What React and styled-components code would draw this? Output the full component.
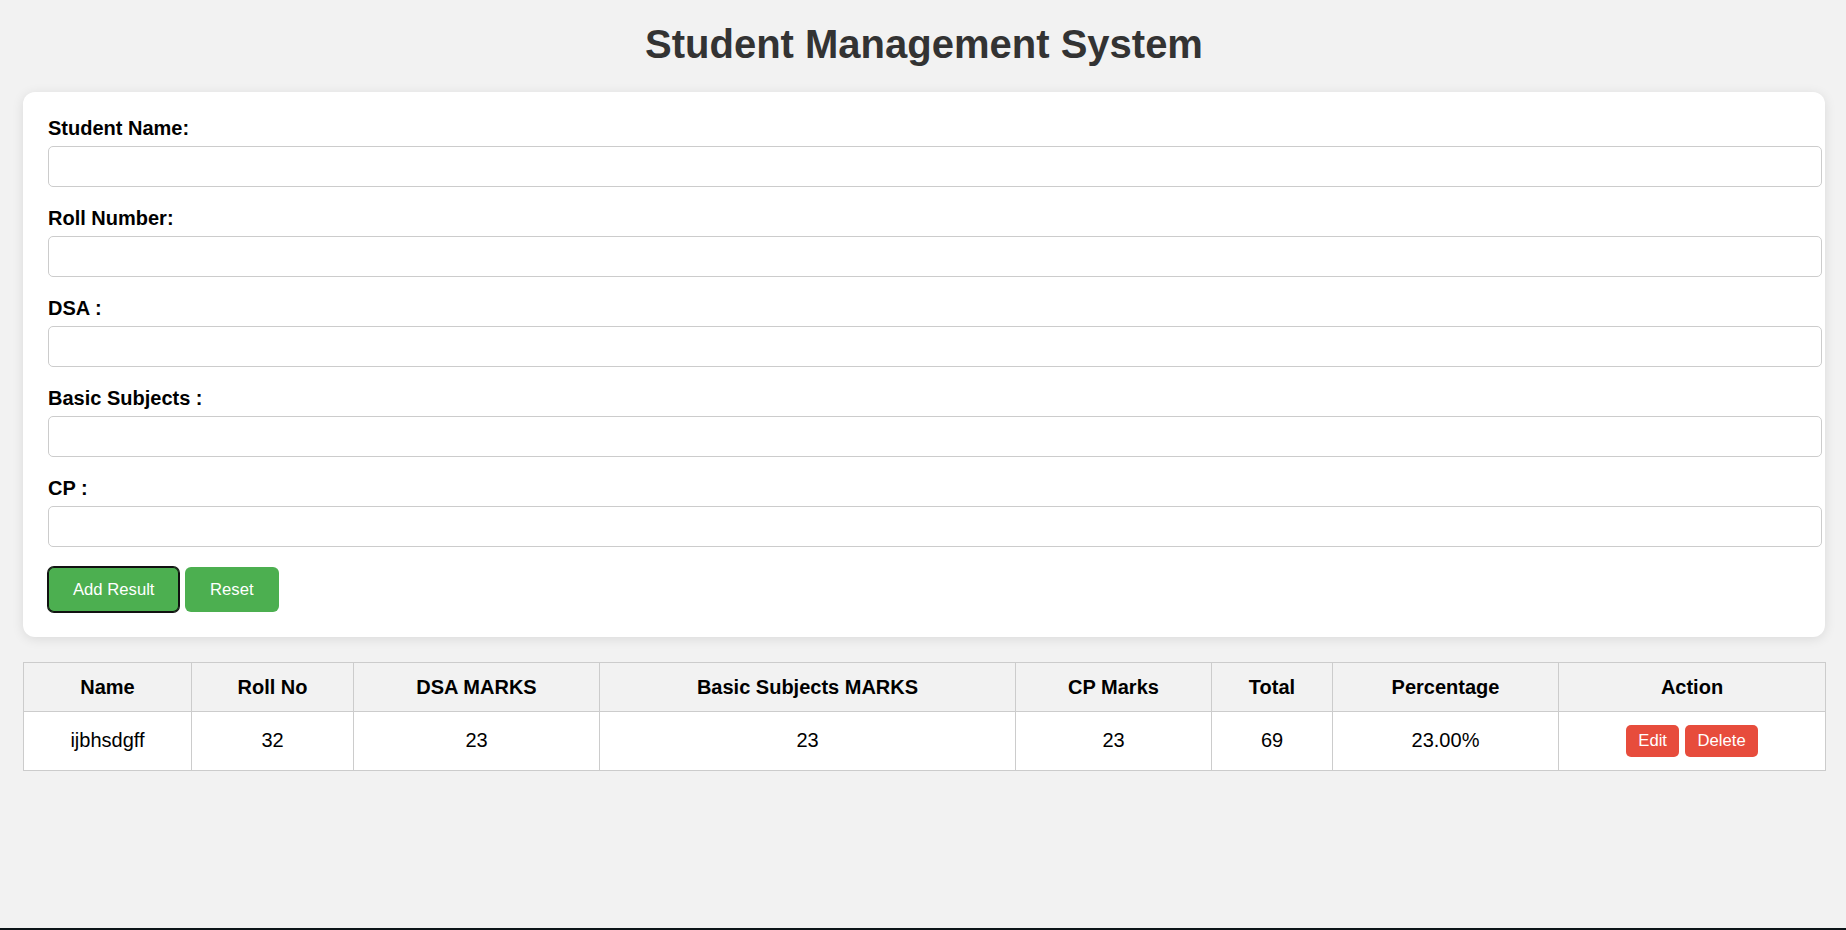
import React, { useState } from "react";
import styled, { createGlobalStyle, css } from "styled-components";

const GlobalStyle = createGlobalStyle`
  * {
    box-sizing: content-box;
  }
  body {
    margin: 0;
    background: #f2f2f2;
    font-family: "Liberation Sans", Arial, sans-serif;
    font-size: 20px;
    color: #000;
  }
`;

const FIELDS = [
  { key: "name", label: "Student Name:" },
  { key: "roll", label: "Roll Number:" },
  { key: "dsa", label: "DSA :" },
  { key: "basic", label: "Basic Subjects :" },
  { key: "cp", label: "CP :" },
];

const COLUMNS = [
  { title: "Name", width: 168 },
  { title: "Roll No", width: 162 },
  { title: "DSA MARKS", width: 246 },
  { title: "Basic Subjects MARKS", width: 416 },
  { title: "CP Marks", width: 196 },
  { title: "Total", width: 121 },
  { title: "Percentage", width: 226 },
  { title: "Action", width: 267 },
];

const emptyForm = { name: "", roll: "", dsa: "", basic: "", cp: "" };

export default function App() {
  const [form, setForm] = useState(emptyForm);
  const [students, setStudents] = useState([
    { name: "ijbhsdgff", roll: "32", dsa: 23, basic: 23, cp: 23 },
  ]);

  const handleChange = (key) => (e) => setForm({ ...form, [key]: e.target.value });

  const handleAdd = () => {
    if (!form.name) return;
    setStudents([
      ...students,
      { ...form, dsa: Number(form.dsa), basic: Number(form.basic), cp: Number(form.cp) },
    ]);
    setForm(emptyForm);
  };

  const handleDelete = (index) => setStudents(students.filter((_, i) => i !== index));

  const handleEdit = (index) => {
    const s = students[index];
    setForm({ name: s.name, roll: s.roll, dsa: `${s.dsa}`, basic: `${s.basic}`, cp: `${s.cp}` });
    handleDelete(index);
  };

  return (
    <>
      <GlobalStyle />
      <Page>
        <Title>Student Management System</Title>
        <Card>
          {FIELDS.map((field) => (
            <Field key={field.key}>
              <Label htmlFor={field.key}>{field.label}</Label>
              <Input id={field.key} value={form[field.key]} onChange={handleChange(field.key)} />
            </Field>
          ))}
          <Actions>
            <GreenButton $focused onClick={handleAdd}>
              Add Result
            </GreenButton>{" "}
            <GreenButton onClick={() => setForm(emptyForm)}>Reset</GreenButton>
          </Actions>
        </Card>

        <Table>
          <colgroup>
            {COLUMNS.map((col) => (
              <Col key={col.title} $width={col.width} />
            ))}
          </colgroup>
          <thead>
            <tr>
              {COLUMNS.map((col) => (
                <Th key={col.title}>{col.title}</Th>
              ))}
            </tr>
          </thead>
          <tbody>
            {students.map((s, i) => {
              const total = s.dsa + s.basic + s.cp;
              return (
                <tr key={`${s.roll}-${i}`}>
                  <Td>{s.name}</Td>
                  <Td>{s.roll}</Td>
                  <Td>{s.dsa}</Td>
                  <Td>{s.basic}</Td>
                  <Td>{s.cp}</Td>
                  <Td>{total}</Td>
                  <Td>{((total / 300) * 100).toFixed(2)}%</Td>
                  <Td>
                    <RedButton onClick={() => handleEdit(i)}>Edit</RedButton>{" "}
                    <RedButton onClick={() => handleDelete(i)}>Delete</RedButton>
                  </Td>
                </tr>
              );
            })}
          </tbody>
        </Table>
        <BottomEdge />
      </Page>
    </>
  );
}

const Page = styled.div`
  display: flex;
  flex-direction: column;
  min-height: 100vh;
  padding: 22px 21px 0 23px;
  box-sizing: border-box;
`;

const Title = styled.h1`
  margin: 0 0 25px;
  text-align: center;
  font-size: 40px;
  font-weight: bold;
  color: #333;
`;

const Card = styled.div`
  background: #fff;
  padding: 25px;
  border-radius: 12px;
  box-shadow: 0 2px 12px rgba(0, 0, 0, 0.1);
`;

const Field = styled.div`
  margin-bottom: 20px;
`;

const Label = styled.label`
  display: block;
  margin-bottom: 6px;
  font-weight: bold;
  line-height: 23px;
`;

const Input = styled.input`
  display: block;
  width: 100%;
  height: 19px;
  padding: 10px;
  border: 1px solid #ccc;
  border-radius: 5px;
  font-family: "Liberation Sans", Arial, sans-serif;
  font-size: 16.67px;
  outline: none;
`;

const Actions = styled.div`
  line-height: 23px;
`;

const buttonBase = css`
  border: none;
  color: #fff;
  font-family: "Liberation Sans", Arial, sans-serif;
  font-size: 16.67px;
  cursor: pointer;
`;

const GreenButton = styled.button`
  ${buttonBase};
  padding: 12.5px 25px;
  background: #4caf50;
  border-radius: 6px;
  vertical-align: middle;
  ${(props) =>
    props.$focused &&
    css`
      box-shadow: 0 0 0 1px #111, inset 0 0 0 1px #111;
    `}
`;

const RedButton = styled.button`
  ${buttonBase};
  padding: 6.25px 12.5px;
  background: #e74c3c;
  border-radius: 5px;
`;

const Table = styled.table`
  width: 100%;
  margin-top: 25px;
  border-collapse: collapse;
  table-layout: fixed;
  background: #fff;
`;

const Col = styled.col`
  width: ${(props) => props.$width}px;
`;

const Th = styled.th`
  padding: 12.5px;
  border: 1px solid #ccc;
  background: #f2f2f2;
  font-weight: bold;
  line-height: 23px;
  text-align: center;
`;

const Td = styled.td`
  padding: 12.5px;
  border: 1px solid #ccc;
  text-align: center;
  line-height: 23px;
`;

const BottomEdge = styled.div`
  margin-top: auto;
  margin-left: -23px;
  margin-right: -21px;
  height: 2px;
  background: #0c1418;
`;
